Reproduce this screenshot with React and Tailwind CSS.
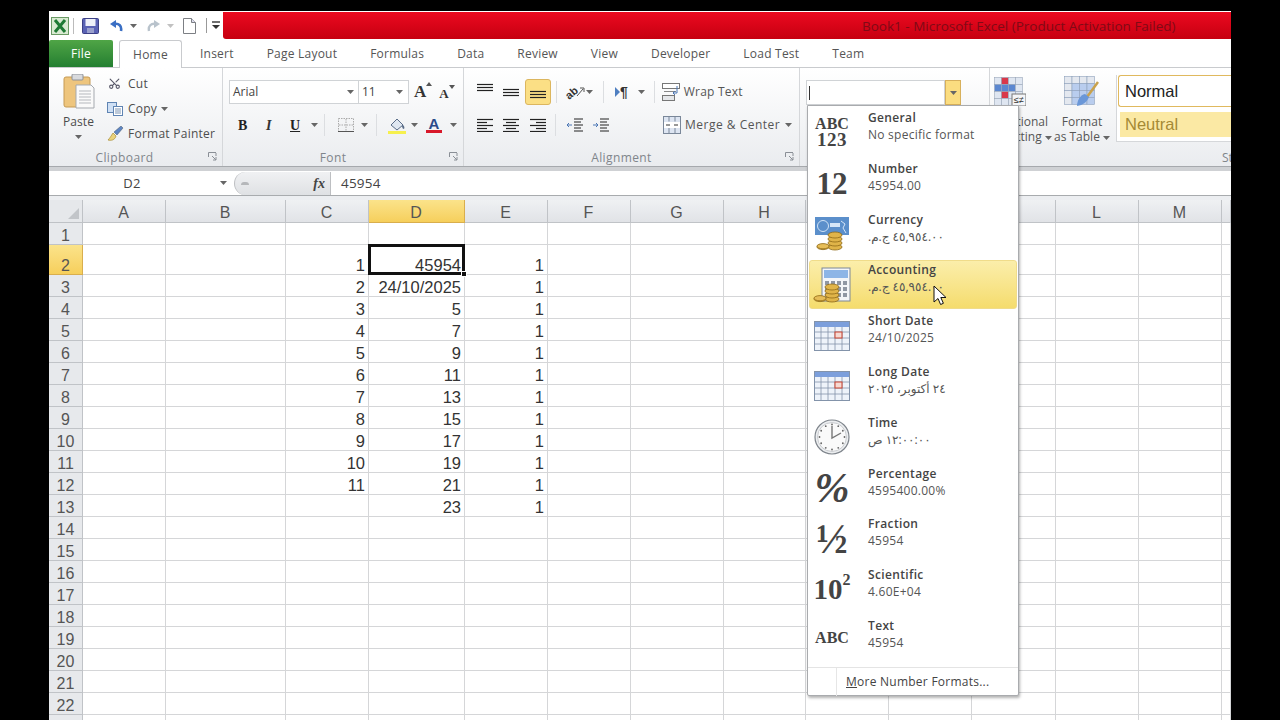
import React from "react";
import { Scissors } from "lucide-react";

const UI = "font-['Open_Sans','DejaVu_Sans',sans-serif]";
const CELL = "font-['Liberation_Sans',Arial,sans-serif]";
const SERIF = "font-['Liberation_Serif','Times_New_Roman',serif]";

const Caret = ({ className = "" }) => (
  <svg width="7" height="4" viewBox="0 0 7 4" className={className}><path d="M0 0h7L3.5 4z" fill="#666" /></svg>
);
const Sep = ({ className = "" }) => <div className={`w-px h-[22px] bg-[#dcdee1] ${className}`} />;

const Lines = ({ rows, w = 18, h = 14 }) => (
  <svg width={w} height={h} viewBox={`0 0 ${w} ${h}`}>
    {rows.map(([a, b, y], i) => (<line key={i} x1={a} x2={b} y1={y + 0.5} y2={y + 0.5} stroke="#222" strokeWidth="1.2" />))}
  </svg>
);
const TOP = [[1, 17, 1], [1, 17, 4], [1, 17, 7]];
const MID = [[1, 17, 4], [1, 17, 7], [1, 17, 10]];
const BOT = [[1, 17, 6], [1, 17, 9], [1, 17, 12]];
const LEFT = [[1, 17, 1], [1, 11, 4], [1, 17, 7], [1, 11, 10], [1, 17, 13]];
const CENTER = [[1, 17, 1], [4, 14, 4], [1, 17, 7], [4, 14, 10], [1, 17, 13]];
const RIGHT = [[1, 17, 1], [7, 17, 4], [1, 17, 7], [7, 17, 10], [1, 17, 13]];

const Launcher = ({ className = "" }) => (
  <svg width="9" height="9" viewBox="0 0 9 9" className={className}><path d="M.5 5V.5H8M8 1v3M4 4l4 4M5 8h3V5" fill="none" stroke="#8a8f96" strokeWidth="1" /></svg>
);

const Group = ({ w, label, children, launcher, labelClass = "" }) => (
  <div className={`flex flex-col h-[98px] shrink-0 relative border-r border-[#d5d7da] ${w}`}>
    <div className="flex-1 min-h-0">{children}</div>
    <div className={`h-[17px] shrink-0 text-[12px] leading-[17px] tracking-[.4px] text-[#80858b] text-center ${labelClass}`}>{label}</div>
    {launcher && <Launcher className="absolute right-[5px] bottom-[5px]" />}
  </div>
);

const Coins = ({ x = 0, y = 0 }) => (
  <g transform={`translate(${x} ${y})`}>
    {[0, 4, 8, 12].map((d) => (<ellipse key={d} cx="18" cy={18 - d} rx="7" ry="3" fill="#e0b449" stroke="#8f6a16" strokeWidth=".8" />))}
    {[0, 4].map((d) => (<ellipse key={d} cx="6" cy={18 - d * 0.2} rx="6" ry="2.6" fill="#e6bd58" stroke="#8f6a16" strokeWidth=".8" />))}
  </g>
);

const CurrencyIcon = () => (
  <svg width="36" height="34" viewBox="0 0 36 34">
    <rect x="1" y="0" width="34" height="18" fill="#5b8fcb" />
    <circle cx="9" cy="9" r="5.5" fill="none" stroke="#cfe2f6" />
    <rect x="16" y="6" width="10" height="4" fill="#d5e6f8" />
    <path d="M27 4l4 3-2 4 3 5" stroke="#d5e6f8" fill="none" />
    <Coins x="3" y="12" />
  </svg>
);
const AccountingIcon = () => (
  <svg width="38" height="36" viewBox="0 0 38 36">
    <rect x="9" y="1" width="28" height="33" fill="#f3f5f8" stroke="#7c8795" />
    <rect x="11" y="3" width="24" height="8" fill="#8db5e6" />
    {[0, 1, 2, 3].map((c) => [0, 1, 2].map((r) => (<rect key={`${c}${r}`} x={12 + c * 6} y={14 + r * 6} width="4" height="4" fill="#8f97a3" />)))}
    <Coins x="1" y="14" />
  </svg>
);
const CalendarIcon = () => (
  <svg width="36" height="30" viewBox="0 0 36 30">
    <rect x=".5" y=".5" width="35" height="29" fill="#eef3fa" stroke="#8393aa" />
    <rect x="1" y="1" width="34" height="5" fill="#7c9fdc" />
    {[7, 14, 21, 28].map((x) => (<line key={x} x1={x} x2={x} y1="6" y2="29" stroke="#8393aa" strokeWidth=".8" />))}
    {[11, 17, 23].map((y) => (<line key={y} x1="1" x2="35" y1={y} y2={y} stroke="#8393aa" strokeWidth=".8" />))}
    <rect x="21" y="11" width="7" height="6" fill="#f6d9d2" stroke="#c8402e" />
  </svg>
);
const ClockIcon = () => (
  <svg width="36" height="36" viewBox="0 0 36 36">
    <circle cx="18" cy="18" r="17" fill="#eceef0" stroke="#7f858c" strokeWidth="1.2" />
    <circle cx="18" cy="18" r="14.5" fill="#fafafa" stroke="#c8cbcf" />
    {Array.from({ length: 12 }).map((_, i) => {
      const a = (i * Math.PI) / 6;
      return <circle key={i} cx={18 + 12.5 * Math.cos(a)} cy={18 + 12.5 * Math.sin(a)} r=".9" fill="#666" />;
    })}
    <path d="M18 7v12l9-5" fill="none" stroke="#777" strokeWidth="1.4" />
  </svg>
);

const Sub = ({ children }) => (
  <div dir="rtl" className="w-fit text-[12px] leading-[17px] text-[#555]">{children}</div>
);

const items = [
  ["General", "No specific format", <div className={`${SERIF} font-bold text-[#444] text-[16px] leading-[15px] text-center`}><div>ABC</div><div className="text-[19px] leading-[17px] tracking-[.5px]">123</div></div>],
  ["Number", "45954.00", <div className={`${SERIF} font-bold text-[#444] text-[31px] leading-none`}>12</div>],
  ["Currency", <Sub>٤٥,٩٥٤.٠٠ ج.م.</Sub>, <CurrencyIcon />],
  ["Accounting", <Sub>٤٥,٩٥٤.٠٠ ج.م.</Sub>, <AccountingIcon />],
  ["Short Date", "24/10/2025", <CalendarIcon />],
  ["Long Date", <Sub>٢٤ أكتوبر، ٢٠٢٥</Sub>, <CalendarIcon />],
  ["Time", <Sub>١٢:٠٠:٠٠ ص</Sub>, <ClockIcon />],
  ["Percentage", "4595400.00%", <div className={`${SERIF} italic font-bold text-[#444] text-[42px] leading-none`}>%</div>],
  ["Fraction", "45954", <div className={`${SERIF} font-bold text-[#444] text-[42px] leading-none`}>½</div>],
  ["Scientific", "4.60E+04", <div className={`${SERIF} font-bold text-[#444] text-[29px] leading-none flex items-start`}>10<span className="text-[16px] leading-[16px] -mt-[3px]">2</span></div>],
  ["Text", "45954", <div className={`${SERIF} font-bold text-[#444] text-[16px] leading-none -mt-[4px]`}>ABC</div>],
];

const Menu = () => (
  <div className="absolute left-[758px] top-[94px] w-[212px] h-[591px] bg-white border border-[#a9abae] shadow-[1px_2px_3px_rgba(0,0,0,.3)] rounded-b-[2px] z-20 flex flex-col">
    <div className="h-[561px] shrink-0 pt-px px-px">
      {items.map(([t, s, icon], i) => (
        <div key={t} className={`flex items-stretch ${i === 3 ? "h-[48.8px] my-px rounded-[3px] border border-[#f0dc8a] bg-gradient-to-b from-[#fbeeaa] to-[#f5dc6c]" : "h-[50.8px] border border-transparent"}`}>
          <div className="w-[44px] shrink-0 flex items-center justify-center">{icon}</div>
          <div className={`ml-[14px] ${i === 3 ? "pt-0" : "pt-px"}`}>
            <div className="text-[12px] leading-[17px] font-semibold text-[#444] tracking-[.35px]">{t}</div>
            <div className="text-[12px] leading-[17px] text-[#555] tracking-[.25px]">{s}</div>
          </div>
        </div>
      ))}
    </div>
    <div className="flex-1 border-t border-[#e4e4e4] flex">
      <div className="w-[29px] border-r border-[#e6e6e6]" />
      <div className="ml-[9px] text-[12px] leading-[28px] text-[#444] tracking-[.25px]"><span className="underline">M</span>ore Number Formats...</div>
    </div>
  </div>
);

const Ribbon = () => (
  <div className="h-[98px] flex bg-gradient-to-b from-white to-[#eaecef] text-[#555] overflow-hidden">
    <Group w="w-[174px]" label="Clipboard" launcher labelClass="pr-[22px]">
      <div className="flex">
        <div className="w-[59px] flex flex-col items-center pt-[6px]">
          <svg width="32" height="36" viewBox="0 0 32 36">
            <rect x="1" y="3" width="26" height="30" rx="2" fill="#eec57d" stroke="#c59a55" />
            <rect x="9" y="0" width="11" height="6" rx="1" fill="#d8dade" stroke="#8e9299" />
            <path d="M13 11h15l3 3v20H13z" fill="#fafafa" stroke="#a5a9af" />
            {[17, 20, 23, 26, 29].map((y) => (<line key={y} x1="16" x2="28" y1={y} y2={y} stroke="#b5b8bd" />))}
          </svg>
          <div className="text-[12px] leading-[16px] mt-[4px] tracking-[.1px] text-[#4c4c4c]">Paste</div>
          <Caret className="mt-[5px]" />
        </div>
        <div className="flex-1 text-[12px] tracking-[.25px] text-[#4d4d4d] pt-[3px] ml-[-1px]">
          <div className="flex items-center h-[25px] gap-[7px] pl-[1px]">
            <Scissors size={13} color="#556" strokeWidth={2} className="-rotate-90" />
            <span>Cut</span>
          </div>
          <div className="flex items-center h-[25px] gap-[5px]">
            <svg width="16" height="14" viewBox="0 0 16 14"><rect x=".5" y=".5" width="9" height="10" fill="#cfe0f5" stroke="#5f84b3" /><rect x="6.5" y="4.5" width="9" height="9" fill="#fff" stroke="#5f84b3" /><path d="M8 7h6M8 9h6M8 11h6" stroke="#7b93b3" /></svg>
            <span>Copy</span><Caret className="-ml-[1px]" />
          </div>
          <div className="flex items-center h-[25px] gap-[4px]">
            <svg width="17" height="16" viewBox="0 0 17 16"><path d="M1 14c3 1 7 0 8-4L6 7C4 10 3 12 1 14z" fill="#ead27c" stroke="#a98c2f" strokeWidth=".7" /><path d="M7 6l3 3 6-7-2-2z" fill="#5d85c4" stroke="#456" strokeWidth=".5" /></svg>
            <span>Format Painter</span>
          </div>
        </div>
      </div>
    </Group>

    <Group w="w-[241px]" label="Font" launcher labelClass="pr-[20px]">
      <div className="pt-[12px] pl-[6px]">
        <div className="flex items-center h-[24px]">
          <div className="w-[130px] h-[24px] border border-[#d0d3d6] bg-white flex items-center justify-between pl-[3px] pr-[4px] text-[12px] text-[#444]">
            <span>Arial</span><Caret />
          </div>
          <div className="w-[50px] h-[24px] border border-l-0 border-[#d0d3d6] bg-white flex items-center justify-between pl-[3px] pr-[5px] text-[12px] text-[#444]">
            <span>11</span><Caret />
          </div>
          <div className={`${SERIF} ml-[5px] font-bold text-[17px] text-[#333] flex items-start`}>A<span className="w-0 h-0 mt-[3px] border-x-[3px] border-b-[4px] border-x-transparent border-b-[#555]" /></div>
          <div className={`${SERIF} ml-[7px] font-bold text-[13px] mt-[3px] text-[#333] flex items-start`}>A<span className="w-0 h-0 mt-[1px] border-x-[3px] border-t-[4px] border-x-transparent border-t-[#555]" /></div>
        </div>
        <div className="flex items-center h-[24px] mt-[9px]">
          <span className={`${SERIF} font-bold text-[14px] text-[#222] ml-[9px] w-[9px]`}>B</span>
          <span className={`${SERIF} italic font-bold text-[14px] text-[#333] ml-[19px] w-[6px]`}>I</span>
          <span className={`${SERIF} underline font-bold text-[14px] text-[#222] ml-[18px] w-[12px]`}>U</span>
          <Caret className="ml-[9px]" />
          <Sep className="ml-[6px]" />
          <svg width="16" height="14" viewBox="0 0 16 14" className="ml-[13px]"><rect x=".5" y=".5" width="15" height="13" fill="none" stroke="#aaa" strokeDasharray="1.5 1" /><path d="M8 1v12M1 7h14" stroke="#aaa" strokeDasharray="1.5 1" /><path d="M0 13.5h16" stroke="#555" /></svg>
          <Caret className="ml-[7px]" />
          <Sep className="ml-[8px]" />
          <svg width="18" height="17" viewBox="0 0 18 17" className="ml-[11px]"><path d="M3 8l6-6 6 6-6 5z" fill="#dfe7f1" stroke="#5a6d88" /><path d="M14 7c2 2 3 3 2 5-2 0-2-3-2-5z" fill="#5a6d88" /><rect x="0" y="14" width="18" height="3" fill="#f6f04d" /></svg>
          <Caret className="ml-[5px]" />
          <div className="ml-[8px] flex flex-col items-center w-[16px]">
            <span className={`${CELL} font-bold text-[15px] leading-[13px] text-[#2a4a8a]`}>A</span>
            <span className="w-[16px] h-[3px] bg-[#d8182a]" />
          </div>
          <Caret className="ml-[8px]" />
        </div>
      </div>
    </Group>

    <Group w="w-[336px]" label="Alignment" launcher labelClass="pr-[20px]">
      <div className="pt-[11px] pl-[12px]">
        <div className="flex items-center h-[26px]">
          <div className="w-[18px] -mt-[4px]"><Lines rows={TOP} /></div>
          <div className="w-[18px] ml-[8px]"><Lines rows={MID} /></div>
          <div className="ml-[5px] w-[26px] h-[26px] rounded-[3px] bg-[#fbdf85] border border-[#dcb65f] flex items-center justify-center"><Lines rows={BOT} /></div>
          <Sep className="ml-[5px]" />
          <svg width="20" height="16" viewBox="0 0 20 16" className="ml-[8px]"><text x="0" y="13" fontSize="11" fontWeight="bold" fill="#333" transform="rotate(-40 6 9)" fontFamily="Liberation Sans">ab</text><path d="M12 12l6-7M15 4h4v4" fill="none" stroke="#555" /></svg>
          <Caret className="ml-[1px]" />
          <Sep className="ml-[10px]" />
          <span className="ml-[11px] w-0 h-0 border-y-[5px] border-l-[5px] border-y-transparent border-l-[#4e7fc1]" />
          <span className={`${CELL} text-[14px] font-bold text-[#333] leading-none`}>¶</span>
          <Caret className="ml-[10px]" />
          <Sep className="ml-[9px]" />
          <svg width="18" height="18" viewBox="0 0 18 18" className="ml-[7px]"><rect x=".5" y=".5" width="17" height="5" fill="#fff" stroke="#777" /><rect x=".5" y="12.5" width="12" height="5" fill="#e5e7ea" stroke="#777" /><path d="M2 8.5h12" stroke="#888" /><path d="M15 3v7h-4M13 8l-2 2 2 2" fill="none" stroke="#4b76b5" /></svg>
          <span className="ml-[4px] text-[12px] tracking-[.2px] text-[#555]">Wrap Text</span>
        </div>
        <div className="flex items-center h-[24px] mt-[8px]">
          <div className="w-[18px]"><Lines rows={LEFT} /></div>
          <div className="w-[18px] ml-[8px]"><Lines rows={CENTER} /></div>
          <div className="w-[18px] ml-[9px]"><Lines rows={RIGHT} /></div>
          <Sep className="ml-[8px]" />
          <svg width="18" height="15" viewBox="0 0 18 15" className="ml-[10px]"><path d="M8 1h9M8 4h7M8 7h9M8 10h7M8 13h9" stroke="#222" /><path d="M6 7H1M3 5L1 7l2 2" stroke="#4b76b5" fill="none" /></svg>
          <svg width="18" height="15" viewBox="0 0 18 15" className="ml-[8px]"><path d="M8 1h9M8 4h7M8 7h9M8 10h7M8 13h9" stroke="#222" /><path d="M1 7h5M4 5l2 2-2 2" stroke="#4b76b5" fill="none" /></svg>
          <span className="ml-[14px] w-px" />
          <svg width="18" height="18" viewBox="0 0 18 18" className="ml-[38px]"><rect x=".5" y=".5" width="17" height="17" fill="#dde5f2" stroke="#7a8799" /><rect x="1" y="6" width="16" height="6" fill="#fff" /><path d="M6 .5v5M12 .5v5M6 12v5M12 12v5" stroke="#7a8799" /><path d="M3 9h4M11 9h4" stroke="#333" /></svg>
          <span className="ml-[4px] text-[12px] tracking-[.5px] text-[#555]">Merge &amp; Center</span>
          <Caret className="ml-[5px]" />
        </div>
      </div>
    </Group>

    <Group w="w-[190px]" label="">
      <div className="pt-[12px] pl-[6px] flex">
        <div className="w-[139px] h-[25px] bg-white border border-[#d0d3d6] flex items-center pl-[2px]"><span className="w-px h-[14px] bg-[#333]" /></div>
        <div className="w-[16px] h-[25px] bg-[#fbdd80] border border-[#d7b05c] flex items-center justify-center"><Caret /></div>
      </div>
    </Group>

    <div className="flex-1 flex min-w-0 relative">
      <div className="w-[72px] shrink-0 flex flex-col items-center pt-[8px] -ml-[10px]">
        <svg width="32" height="30" viewBox="0 0 32 30" className="-ml-[12px]">
          {[0, 1, 2, 3].map((c) => [0, 1, 2, 3].map((r) => (<rect key={`${c}${r}`} x={c * 7 + .5} y={r * 7 + 1.5} width="7" height="7" fill={c === 1 && r % 2 === 0 ? "#d9384a" : c < 3 && r === 1 ? "#5b87d0" : "#dfe6f1"} stroke="#9aa7b9" strokeWidth=".6" />)))}
          <rect x="18" y="18" width="14" height="12" fill="#f4f5f7" stroke="#777" />
          <text x="20" y="27" fontSize="9" fontFamily="Liberation Sans" fill="#333">≤≠</text>
        </svg>
        <div className="text-[12px] leading-[15px] text-center mt-[8px] whitespace-nowrap text-[#555]">Conditional<br />Formatting <Caret className="inline" /></div>
      </div>
      <div className="w-[66px] shrink-0 flex flex-col items-center pt-[8px] -ml-[3px]">
        <svg width="36" height="32" viewBox="0 0 36 32">
          {[0, 1, 2, 3].map((c) => [0, 1, 2, 3].map((r) => (<rect key={`${c}${r}`} x={c * 7.5 + .5} y={r * 7 + .5} width="7.5" height="7" fill={r === 0 ? "#e4e8ef" : c > 0 ? "#b9cdee" : "#e4e8ef"} stroke="#8ea1bb" strokeWidth=".6" />)))}
          <path d="M34 6L23 21" stroke="#c9a24c" strokeWidth="2.5" />
          <path d="M25 21c-2 5-6 8-12 9 0-5 3-11 8-12z" fill="#6a97d8" />
        </svg>
        <div className="text-[12px] leading-[15px] text-center mt-[6px] whitespace-nowrap text-[#555]">Format<br />as Table <Caret className="inline" /></div>
      </div>
      <div className="flex-1 min-w-0 h-[67px] mt-[7px] border-l border-b border-[#d5d7da] bg-white ml-[1px] overflow-hidden pl-px">
        <div className={`${CELL} h-[32px] rounded-l-[3px] border border-r-0 border-[#e0b95e] bg-white text-[16.5px] leading-[30px] pl-[6px] text-[#222]`}>Normal</div>
        <div className={`${CELL} h-[25px] mt-[5px] ml-[2px] bg-[#fbe9a4] text-[16.5px] leading-[25px] pl-[5px] text-[#a58a35]`}>Neutral</div>
      </div>
      <div className="absolute right-0 bottom-0 h-[17px] text-[12px] leading-[17px] text-[#80858b] w-[9px] overflow-hidden">St</div>
    </div>
  </div>
);

const COLS = ["A", "B", "C", "D", "E", "F", "G", "H", "I", "J", "K", "L", "M", ""];
const dColumn = { 2: "45954", 3: "24/10/2025", 4: "5", 5: "7", 6: "9", 7: "11", 8: "13", 9: "15", 10: "17", 11: "19", 12: "21", 13: "23" };

const Grid = () => {
  const rows = Array.from({ length: 23 }, (_, i) => i + 1);
  return (
    <div className={`${CELL} flex-1 min-h-0 overflow-hidden bg-white`}>
      <div className="grid grid-cols-[34px_83px_120px_83px_96px_83px_83px_93px_82px_83px_83px_84px_83px_83px_9px]">
        <div className="h-[23px] bg-[#e6e8eb] border-r border-b border-[#bfc2c6] flex items-end justify-end p-[3px]">
          <span className="w-0 h-0 border-l-[11px] border-b-[11px] border-l-transparent border-b-[#c2c5c9]" />
        </div>
        {COLS.map((c, i) => (
          <div key={i} className={`h-[23px] border-r border-b text-center text-[16px] leading-[25px] pr-px ${c === "D" ? "bg-gradient-to-b from-[#fbe38a] to-[#f6cf5b] border-[#d9ae4d] text-[#555]" : "bg-gradient-to-b from-[#eff1f3] to-[#e1e3e7] border-[#c0c3c7] text-[#555]"}`}>{c}</div>
        ))}
        {rows.map((r) => {
          const h = r === 2 ? "h-[30px]" : "h-[22px]";
          return (
            <React.Fragment key={r}>
              <div className={`${h} border-r border-b flex items-end justify-center text-[16px] leading-[17px] ${r === 2 ? "bg-gradient-to-b from-[#fbe38a] to-[#f6cf5b] border-[#d9ae4d] text-[#555]" : "bg-[#e7e9ec] border-[#c0c3c7] text-[#555]"}`}>{r}</div>
              {COLS.map((c, i) => {
                let v = "";
                if (c === "C" && r >= 2 && r <= 12) v = r - 1;
                if (c === "D") v = dColumn[r] || "";
                if (c === "E" && r >= 2 && r <= 13) v = 1;
                const sel = c === "D" && r === 2;
                return (
                  <div key={i} className={`${h} relative border-r border-b border-[#d5d6d8] flex items-end justify-end pr-[3px] text-[16.5px] leading-[17px] text-[#333]`}>
                    {v}
                    {sel && (
                      <div className="absolute -left-px -top-px -right-[1px] -bottom-[1px] border-[3px] border-[#111] z-10">
                        <span className="absolute -right-[5px] -bottom-[5px] w-[6px] h-[6px] bg-[#111] border border-white" />
                      </div>
                    )}
                  </div>
                );
              })}
            </React.Fragment>
          );
        })}
      </div>
    </div>
  );
};

export default function App() {
  return (
    <div className={`w-[1280px] h-[720px] bg-black overflow-hidden pt-[11px] pl-[49px] ${UI}`}>
      <div className="w-[1182px] h-[709px] bg-white flex flex-col relative">
        <div className="h-[28px] shrink-0 flex border-t border-white">
          <div className="w-[174px] shrink-0 flex items-center bg-white pl-[2px]">
            <svg width="18" height="18" viewBox="0 0 18 18"><rect x=".5" y=".5" width="17" height="17" fill="#d9ead2" stroke="#6a9a64" /><path d="M4 3l10 12M14 3L4 15" stroke="#1e7a34" strokeWidth="3" /></svg>
            <span className="ml-[4px] w-px h-[16px] bg-[#bbb]" />
            <svg width="17" height="16" viewBox="0 0 17 16" className="ml-[8px]"><rect x=".5" y=".5" width="16" height="15" rx="1" fill="#5a62b4" stroke="#3b3f85" /><rect x="3.5" y="1" width="10" height="7" fill="#eef0f8" /><rect x="5" y="10" width="7" height="5" fill="#9aa0cc" /></svg>
            <svg width="14" height="13" viewBox="0 0 14 13" className="ml-[10px]"><path d="M12 12c1-5-2-8-7-7" fill="none" stroke="#3a6fc4" strokeWidth="2.6" /><path d="M1 5l6-4v8z" fill="#3a6fc4" /></svg>
            <Caret className="ml-[7px]" />
            <svg width="14" height="13" viewBox="0 0 14 13" className="ml-[10px]"><path d="M2 12C1 7 4 4 9 5" fill="none" stroke="#b9c3cc" strokeWidth="2.4" /><path d="M13 5L7 1v8z" fill="#b9c3cc" /></svg>
            <Caret className="ml-[6px] opacity-40" />
            <svg width="13" height="16" viewBox="0 0 13 16" className="ml-[9px]"><path d="M.5.5h8l4 4v11H.5z" fill="#fff" stroke="#7c7f84" /><path d="M8.5.5v4h4" fill="#dde" stroke="#7c7f84" /></svg>
            <span className="ml-[10px] w-px h-[15px] bg-[#999]" />
            <svg width="8" height="9" viewBox="0 0 8 9" className="ml-[5px]"><path d="M0 1h8" stroke="#333" strokeWidth="1.4" /><path d="M0 4h8L4 8z" fill="#333" /></svg>
          </div>
          <div className="flex-1 rounded-bl-[3px] bg-gradient-to-b from-[#ec0a20] to-[#c60010] pl-[639px] text-[13.5px] leading-[29px] text-[#800a16] whitespace-nowrap overflow-hidden">Book1 - Microsoft Excel (Product Activation Failed)</div>
        </div>

        <div className="h-[29px] shrink-0 flex items-end border-b border-[#c9cbce] text-[12px] tracking-[.22px] text-[#555]">
          <div className="w-[64px] h-[27px] rounded-t-[2px] bg-gradient-to-b from-[#4fa546] to-[#237f31] text-white text-center leading-[27px]">File</div>
          <div className="ml-[6px] w-[63px] h-[28px] -mb-px bg-white border border-b-0 border-[#c9cbce] rounded-t-[3px] text-center leading-[27px] z-10">Home</div>
          <div className="ml-[18px] h-[27px] leading-[27px] flex gap-[33px]">
            {["Insert", "Page Layout", "Formulas", "Data", "Review", "View", "Developer", "Load Test", "Team"].map((t) => (<span key={t}>{t}</span>))}
          </div>
        </div>

        <Ribbon />

        <div className="h-[5px] shrink-0 bg-[#cfd1d4] border-t border-[#a6a9ad]" />
        <div className="h-[25px] shrink-0 bg-white border-b border-[#a8abae] flex items-center text-[#444]">
          <div className="w-[184px] shrink-0 relative text-center text-[13px] tracking-[.2px] pr-[18px] pt-px">D2<Caret className="absolute right-[6px] top-[8px]" /></div>
          <div className="w-[97px] h-[23px] shrink-0 rounded-l-full border-l border-[#bdbfc2] bg-gradient-to-b from-[#f0f1f3] to-[#dfe1e4] flex items-center justify-between pl-[6px] pr-[5px] ml-[1px] border-r">
            <span className="w-[8px] h-[3px] bg-[#b5b7ba] rounded-t" />
            <span className={`${SERIF} italic font-bold text-[14px] text-[#444]`}>fx</span>
          </div>
          <span className="ml-[10px] text-[13.5px] tracking-[.2px] pt-px">45954</span>
        </div>
        <div className="h-[4px] shrink-0 bg-[#eceef1]" />

        <Grid />
        <Menu />

        <svg width="15" height="21" viewBox="0 0 15 21" className="absolute left-[884px] top-[274px] z-30">
          <path d="M1 1v16l4-3.5 2.6 6 2.8-1.2-2.6-5.8H13z" fill="#fff" stroke="#111" strokeWidth="1" />
        </svg>
      </div>
    </div>
  );
}
